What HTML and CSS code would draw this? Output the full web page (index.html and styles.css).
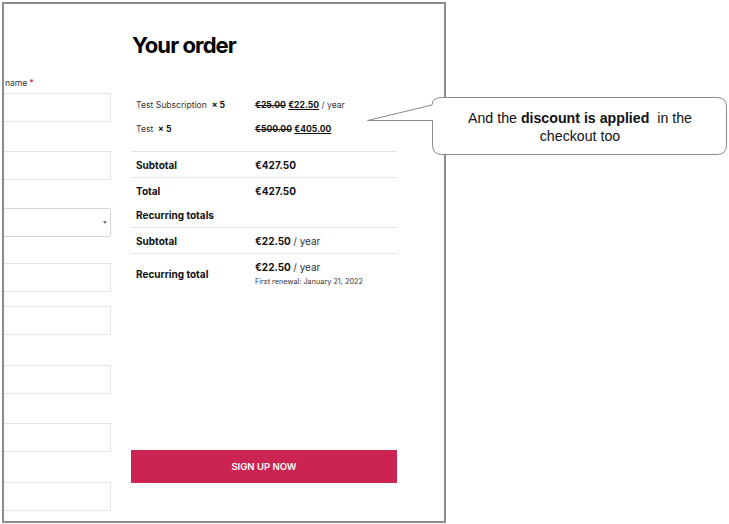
FILE: index.html
```html
<!DOCTYPE html>
<html>
<head>
<meta charset="utf-8">
<link rel="stylesheet" href="styles.css">
</head>
<body>
<div class="frame">
  <div class="form-col">
    <div class="label">name <span class="req">*</span></div>
    <div class="input"></div>
    <div class="input gap29"></div>
    <div class="input select gap28"><span class="arrow"></span></div>
    <div class="input gap26"></div>
    <div class="input gap14"></div>
    <div class="input gap30"></div>
    <div class="input gap29"></div>
    <div class="input gap30"></div>
  </div>
  <div class="order-col">
    <h2 class="title">Your order</h2>
    <div class="items">
      <div class="item"><span class="name">Test Subscription&nbsp;&nbsp;<b>× 5</b></span><span class="price"><s>€25.00</s> <u>€22.50</u> <span class="reg">/ year</span></span></div>
      <div class="item"><span class="name">Test&nbsp;&nbsp;<b>× 5</b></span><span class="price"><s>€500.00</s> <u>€405.00</u></span></div>
    </div>
    <div class="row line"><span class="lbl">Subtotal</span><span class="val">€427.50</span></div>
    <div class="row line"><span class="lbl">Total</span><span class="val">€427.50</span></div>
    <div class="row head"><span class="lbl">Recurring totals</span></div>
    <div class="row line"><span class="lbl">Subtotal</span><span class="val">€22.50 <span class="reg">/ year</span></span></div>
    <div class="row line last"><span class="lbl">Recurring total</span><span class="val stack"><span>€22.50 <span class="reg">/ year</span></span><span class="renew">First renewal: January 21, 2022</span></span></div>
    <button class="signup">SIGN UP NOW</button>
  </div>
</div>
<div class="callout">
  <svg class="bubble" width="369" height="64" viewBox="0 0 369 64">
    <path d="M7.5 29.5 L72 14 Q72 6.5 82 6.5 L357 6.5 Q366.5 6.5 366.5 16 L366.5 54 Q366.5 63.5 357 63.5 L82 63.5 Q72.5 63.5 72.5 54 L72.5 29.5 Z" fill="#fff" stroke="#8a8a8a" stroke-width="1"/>
  </svg>
  <div class="callout-text">And the <b>discount is applied</b>&nbsp; in the checkout too</div>
</div>
</body>
</html>
```
FILE: styles.css
```css
html, body {
  margin: 0;
  padding: 0;
  background: #fff;
}
body {
  width: 729px;
  height: 524px;
  position: relative;
  font-family: Inter, "Noto Sans", sans-serif;
  color: #111;
}
.frame {
  position: absolute;
  left: 2px;
  top: 2px;
  width: 440px;
  height: 517px;
  border: 2px solid #8c8c8c;
  display: flex;
  overflow: hidden;
  box-sizing: content-box;
}
.form-col {
  width: 107px;
  flex: none;
  display: flex;
  flex-direction: column;
  overflow: hidden;
}
.label {
  margin-top: 73px;
  height: 12px;
  font-size: 8.5px;
  line-height: 12px;
  color: #333;
  padding-left: 1px;
}
.req { color: #c7254e; }
.input {
  margin-left: -10px;
  margin-top: 4px;
  height: 27px;
  border: 1px solid #e4e4e4;
  flex: none;
  position: relative;
}
.gap30 { margin-top: 30px; }
.gap29 { margin-top: 29px; }
.gap28 { margin-top: 28px; }
.gap26 { margin-top: 26px; }
.gap14 { margin-top: 14px; }
.select {
  border-color: #d6d6d6;
  border-radius: 2px;
}
.arrow {
  position: absolute;
  right: 3px;
  top: 12px;
  width: 0;
  height: 0;
  border-left: 2px solid transparent;
  border-right: 2px solid transparent;
  border-top: 3px solid #777;
}
.order-col {
  margin-left: 20px;
  width: 266px;
  flex: none;
  display: flex;
  flex-direction: column;
}
.title {
  margin: 28px 0 0 1px;
  font-size: 22px;
  line-height: 26px;
  font-weight: 700;
  letter-spacing: -0.9px;
  color: #000;
}
.items {
  margin-top: 35px;
  padding-bottom: 10px;
}
.item {
  height: 24px;
  display: flex;
  align-items: center;
  font-size: 8.6px;
  color: #333;
}
.item .name {
  width: 119px;
  padding-left: 5px;
}
.item b, .price s, .price u { font-weight: 700; color: #111; }
.price .reg { color: #333; }
.row {
  display: flex;
  align-items: center;
  min-height: 25px;
  font-size: 10px;
}
.line { border-top: 1px solid #e6e6e6; }
.head { min-height: 24px; }
.lbl {
  width: 119px;
  padding-left: 5px;
  font-weight: 700;
  color: #111;
}
.val {
  font-weight: 700;
  color: #111;
}
.stack {
  display: flex;
  flex-direction: column;
}
.val .reg { font-weight: 400; color: #333; }
.last { padding: 7px 0 6px; }
.renew {
  font-size: 7.3px;
  font-weight: 400;
  color: #333;
  margin-top: 4px;
}
.signup {
  margin-top: 158px;
  height: 33px;
  border: none;
  background: #cc2452;
  color: #fff;
  font-family: Inter, "Noto Sans", sans-serif;
  font-weight: 600;
  font-size: 9.5px;
  width: 266px;
  padding: 0;
}
.callout {
  position: absolute;
  left: 360px;
  top: 91px;
  width: 369px;
  height: 64px;
}
.bubble {
  position: absolute;
  left: 0;
  top: 0;
}
.callout-text {
  position: absolute;
  left: 95px;
  top: 18px;
  width: 250px;
  text-align: center;
  font-family: "Liberation Sans", Arial, sans-serif;
  font-size: 14.2px;
  line-height: 18px;
  color: #111;
}
```
